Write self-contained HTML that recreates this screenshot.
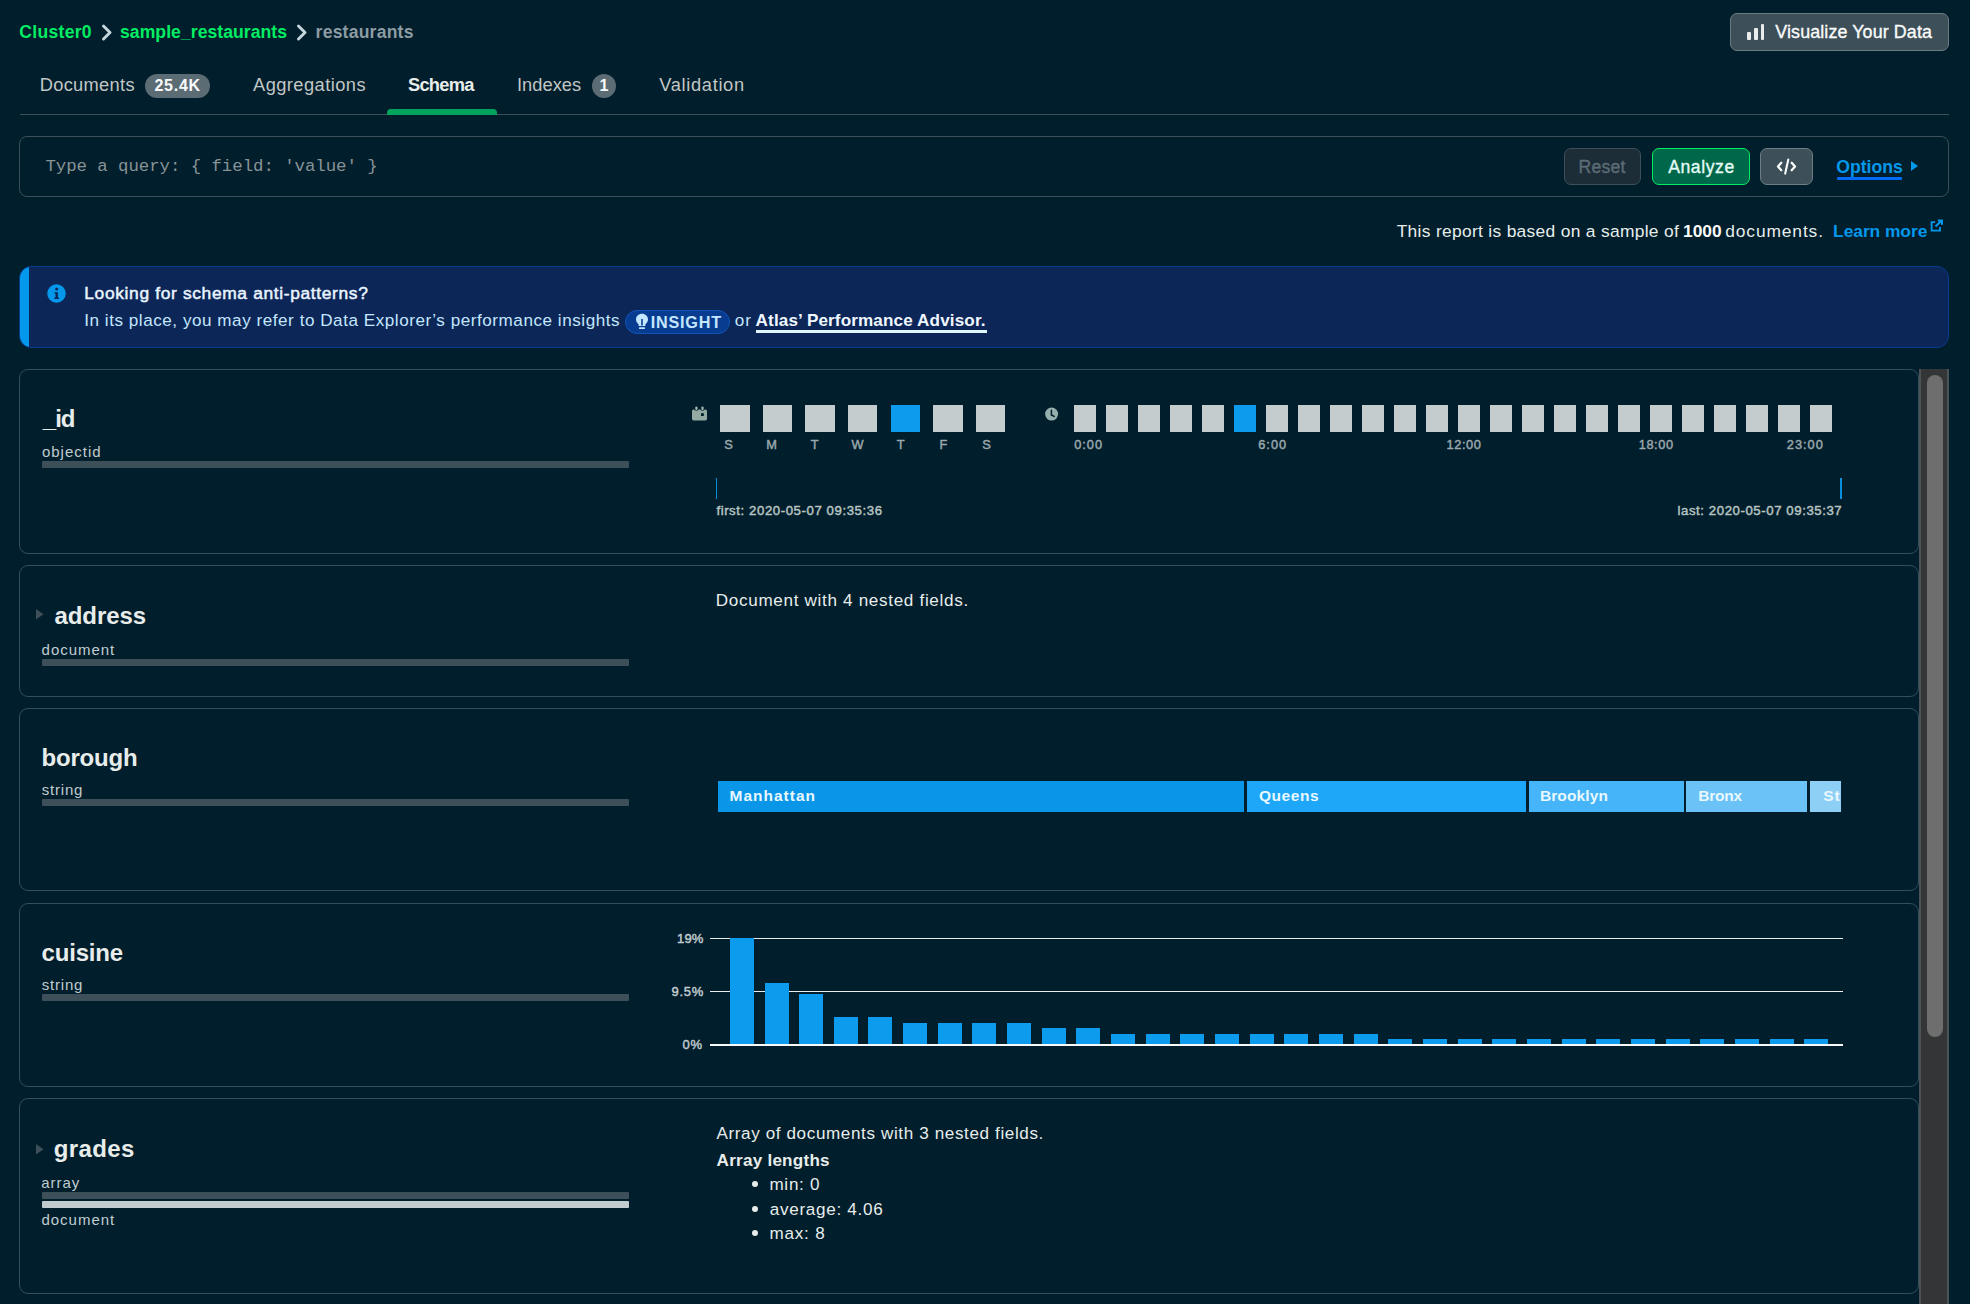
<!DOCTYPE html>
<html><head><meta charset="utf-8">
<style>
*{box-sizing:border-box;margin:0;padding:0}
html,body{width:1970px;height:1304px;overflow:hidden;background:#001E2B;font-family:"Liberation Sans",sans-serif;color:#E8EDEB}
.a{position:absolute;white-space:pre;line-height:1}
.card{position:absolute;left:19px;width:1900px;border:1px solid #30505C;border-radius:9px}
.bar{position:absolute;left:42px;width:587px;height:6px;background:#3D4F58;border-radius:1px}
.sq{position:absolute}
.cb{position:absolute;width:24px;background:#0D9BEE}
</style></head><body>
<svg class="a" style="left:100px;top:23px" width="14" height="19" viewBox="0 0 14 19"><path d="M3.5 3 L10 9.5 L3.5 16" fill="none" stroke="#C5D5DC" stroke-width="3" stroke-linecap="round" stroke-linejoin="round"/></svg>
<svg class="a" style="left:295px;top:23px" width="14" height="19" viewBox="0 0 14 19"><path d="M3.5 3 L10 9.5 L3.5 16" fill="none" stroke="#C5D5DC" stroke-width="3" stroke-linecap="round" stroke-linejoin="round"/></svg>
<div class="a" style="left:1730px;top:13px;width:219px;height:38px;background:#3D4F58;border:1px solid #6A7B84;border-radius:7px"></div>
<div class="a" style="left:1747px;top:32px;width:3.5px;height:7.5px;background:#E8EDEB;border-radius:1px"></div>
<div class="a" style="left:1754px;top:28px;width:3.8px;height:11.5px;background:#E8EDEB;border-radius:1px"></div>
<div class="a" style="left:1761px;top:24px;width:3.3px;height:15.5px;background:#E8EDEB;border-radius:1px"></div>
<div class="a" style="left:145px;top:74px;width:65px;height:24px;background:#5C6C75;border-radius:12px"></div>
<div class="a" style="left:592px;top:74px;width:24px;height:24px;background:#5C6C75;border-radius:12px"></div>
<div class="a" style="left:20px;top:114px;width:1929px;height:1px;background:#3D4F58"></div>
<div class="a" style="left:387px;top:109px;width:110px;height:6px;background:#00A35C;border-radius:4px 4px 0 0"></div>
<div class="a" style="left:19px;top:136px;width:1930px;height:61px;border:1px solid #3D4F58;border-radius:8px"></div>
<div class="a" style="left:1564px;top:148px;width:77px;height:37px;background:#1C2D38;border:1px solid #3D4F58;border-radius:7px"></div>
<div class="a" style="left:1652px;top:148px;width:98px;height:37px;background:#00684A;border:1px solid #00ED64;border-radius:7px"></div>
<div class="a" style="left:1760px;top:148px;width:53px;height:37px;background:#3D4F58;border:1px solid #6D7E86;border-radius:7px"></div>
<svg class="a" style="left:1776px;top:158px" width="21" height="17" viewBox="0 0 21 17"><path d="M5.3 4.8 L2 8.5 L5.3 12.2 M15.7 4.8 L19 8.5 L15.7 12.2" fill="none" stroke="#F9FBFA" stroke-width="2.3" stroke-linecap="round" stroke-linejoin="round"/><path d="M12.3 1.6 L9.2 15.6" fill="none" stroke="#F9FBFA" stroke-width="2.1" stroke-linecap="round"/></svg>
<div class="a" style="left:1837px;top:177px;width:65px;height:3px;background:#016BF8;border-radius:1px"></div>
<svg class="a" style="left:1910px;top:160px" width="9" height="12" viewBox="0 0 9 12"><path d="M1 1 L8 6 L1 11 Z" fill="#0498EC"/></svg>
<svg class="a" style="left:1929px;top:219px" width="15" height="14" viewBox="0 0 15 14"><path d="M6 3.2 H2.6 V11.6 H11 V8" fill="none" stroke="#0498EC" stroke-width="1.8"/><path d="M6.5 7.5 L12.5 1.8 M8.8 1.5 H13 V5.7" fill="none" stroke="#0498EC" stroke-width="2"/></svg>
<div class="a" style="left:19px;top:266px;width:1930px;height:82px;background:#0C2657;border:1px solid #083C90;border-radius:12px;overflow:hidden"><div style="position:absolute;left:-1px;top:-1px;width:10px;height:82px;background:#0498EC"></div></div>
<svg class="a" style="left:47px;top:284px" width="19" height="19" viewBox="0 0 19 19"><circle cx="9.5" cy="9.5" r="9.3" fill="#0498EC"/><circle cx="9.7" cy="5" r="1.6" fill="#0C2657"/><path d="M7.3 8.2 H10.9 V13.6 H12 V15 H7.3 V13.6 H8.5 V9.6 H7.3 Z" fill="#0C2657"/></svg>
<div class="a" style="left:625px;top:310px;width:105px;height:24px;background:#083C90;border:1px solid #1254B7;border-radius:12px"></div>
<svg class="a" style="left:635px;top:313px" width="14" height="17" viewBox="0 0 14 17"><path d="M7 0.8 C3.5 0.8 1 3.3 1 6.5 C1 8.7 2.3 10.1 3.6 11.3 V13 H10.4 V11.3 C11.7 10.1 13 8.7 13 6.5 C13 3.3 10.5 0.8 7 0.8 Z" fill="#C3E7FE"/><rect x="6.2" y="6" width="1.6" height="6.5" fill="#083C90"/><rect x="4" y="14.2" width="6" height="1.8" rx="0.6" fill="#C3E7FE"/></svg>
<div class="a" style="left:756px;top:330px;width:231px;height:2.5px;background:#E1F7FF"></div>
<div class="a" style="left:1919px;top:369px;width:30px;height:935px;background:#333536;border-left:2px solid #4B5356;border-right:2px solid #4B5356"></div>
<div class="a" style="left:1927px;top:375px;width:16px;height:662px;background:#6E6E6E;border-radius:8px"></div>
<div class="card" style="top:369px;height:185px"></div>
<div class="card" style="top:565px;height:132px"></div>
<div class="card" style="top:708px;height:183px"></div>
<div class="card" style="top:903px;height:184px"></div>
<div class="card" style="top:1098px;height:196px"></div>
<div class="bar" style="top:461px;height:7px"></div>
<div class="bar" style="top:659px;height:7px"></div>
<div class="bar" style="top:799px;height:7px"></div>
<div class="bar" style="top:994px;height:7px"></div>
<div class="bar" style="top:1192px;height:7px"></div>
<div class="bar" style="top:1201px;height:7px;background:#C1CCD0"></div>
<svg class="a" style="left:35.5px;top:609px" width="8" height="11" viewBox="0 0 8 11"><path d="M0 0 L7.5 5.2 L0 10.4 Z" fill="#3D4F58"/></svg>
<svg class="a" style="left:35.5px;top:1144px" width="8" height="11" viewBox="0 0 8 11"><path d="M0 0 L7.5 5.2 L0 10.4 Z" fill="#3D4F58"/></svg>
<div class="a" style="left:752px;top:1180.8px;width:6px;height:6px;border-radius:50%;background:#E8EDEB"></div>
<div class="a" style="left:752px;top:1205.9px;width:6px;height:6px;border-radius:50%;background:#E8EDEB"></div>
<div class="a" style="left:752px;top:1230.0px;width:6px;height:6px;border-radius:50%;background:#E8EDEB"></div>
<div class="sq" style="left:720.00px;top:405px;width:29.5px;height:27px;background:#C5CCCE"></div>
<div class="sq" style="left:762.63px;top:405px;width:29.5px;height:27px;background:#C5CCCE"></div>
<div class="sq" style="left:805.26px;top:405px;width:29.5px;height:27px;background:#C5CCCE"></div>
<div class="sq" style="left:847.89px;top:405px;width:29.5px;height:27px;background:#C5CCCE"></div>
<div class="sq" style="left:890.52px;top:405px;width:29.5px;height:27px;background:#0D9BEE"></div>
<div class="sq" style="left:933.15px;top:405px;width:29.5px;height:27px;background:#C5CCCE"></div>
<div class="sq" style="left:975.78px;top:405px;width:29.5px;height:27px;background:#C5CCCE"></div>
<div class="sq" style="left:1074px;top:405px;width:22px;height:27px;background:#C5CCCE"></div>
<div class="sq" style="left:1106px;top:405px;width:22px;height:27px;background:#C5CCCE"></div>
<div class="sq" style="left:1138px;top:405px;width:22px;height:27px;background:#C5CCCE"></div>
<div class="sq" style="left:1170px;top:405px;width:22px;height:27px;background:#C5CCCE"></div>
<div class="sq" style="left:1202px;top:405px;width:22px;height:27px;background:#C5CCCE"></div>
<div class="sq" style="left:1234px;top:405px;width:22px;height:27px;background:#0D9BEE"></div>
<div class="sq" style="left:1266px;top:405px;width:22px;height:27px;background:#C5CCCE"></div>
<div class="sq" style="left:1298px;top:405px;width:22px;height:27px;background:#C5CCCE"></div>
<div class="sq" style="left:1330px;top:405px;width:22px;height:27px;background:#C5CCCE"></div>
<div class="sq" style="left:1362px;top:405px;width:22px;height:27px;background:#C5CCCE"></div>
<div class="sq" style="left:1394px;top:405px;width:22px;height:27px;background:#C5CCCE"></div>
<div class="sq" style="left:1426px;top:405px;width:22px;height:27px;background:#C5CCCE"></div>
<div class="sq" style="left:1458px;top:405px;width:22px;height:27px;background:#C5CCCE"></div>
<div class="sq" style="left:1490px;top:405px;width:22px;height:27px;background:#C5CCCE"></div>
<div class="sq" style="left:1522px;top:405px;width:22px;height:27px;background:#C5CCCE"></div>
<div class="sq" style="left:1554px;top:405px;width:22px;height:27px;background:#C5CCCE"></div>
<div class="sq" style="left:1586px;top:405px;width:22px;height:27px;background:#C5CCCE"></div>
<div class="sq" style="left:1618px;top:405px;width:22px;height:27px;background:#C5CCCE"></div>
<div class="sq" style="left:1650px;top:405px;width:22px;height:27px;background:#C5CCCE"></div>
<div class="sq" style="left:1682px;top:405px;width:22px;height:27px;background:#C5CCCE"></div>
<div class="sq" style="left:1714px;top:405px;width:22px;height:27px;background:#C5CCCE"></div>
<div class="sq" style="left:1746px;top:405px;width:22px;height:27px;background:#C5CCCE"></div>
<div class="sq" style="left:1778px;top:405px;width:22px;height:27px;background:#C5CCCE"></div>
<div class="sq" style="left:1810px;top:405px;width:22px;height:27px;background:#C5CCCE"></div>
<svg class="a" style="left:691px;top:405px" width="17" height="17" viewBox="0 0 17 17"><rect x="1" y="4.4" width="15" height="11" rx="1.6" fill="#92AAA2"/><circle cx="5.4" cy="3.6" r="2.2" fill="#001E2B"/><circle cx="11.5" cy="3.6" r="2.2" fill="#001E2B"/><rect x="4.3" y="1.4" width="2.2" height="3.6" rx="1.1" fill="#A6BCB8"/><rect x="10.4" y="1.4" width="2.2" height="3.6" rx="1.1" fill="#A6BCB8"/><rect x="10" y="8.2" width="2.8" height="2.8" fill="#001E2B"/></svg>
<svg class="a" style="left:1044px;top:407px" width="15" height="15" viewBox="0 0 15 15"><circle cx="7.6" cy="7.1" r="6.5" fill="#96B0AE"/><path d="M7.4 3.2 V8 L10.2 9.4" fill="none" stroke="#001E2B" stroke-width="1.5" stroke-linecap="round" stroke-linejoin="round"/></svg>
<div class="a" style="left:715.5px;top:478px;width:1.6px;height:21px;background:#0A8FDC"></div>
<div class="a" style="left:1840px;top:478px;width:1.6px;height:21px;background:#0A8FDC"></div>
<div class="a" style="left:718px;top:781px;width:526px;height:31px;background:#0A96E8"></div>
<div class="a" style="left:1247px;top:781px;width:279px;height:31px;background:#1EA7F8"></div>
<div class="a" style="left:1529px;top:781px;width:155px;height:31px;background:#45B4F8"></div>
<div class="a" style="left:1686px;top:781px;width:121px;height:31px;background:#6AC2F7"></div>
<div class="a" style="left:1810px;top:781px;width:31px;height:31px;background:#8ECFF5"></div>
<div class="a" style="left:710px;top:937.5px;width:1133px;height:1.5px;background:#E8EDEB"></div>
<div class="a" style="left:710px;top:990.5px;width:1133px;height:1.5px;background:#E8EDEB"></div>
<div class="a" style="left:710px;top:1043.6px;width:1133px;height:2.5px;background:#F9FBFA"></div>
<div class="cb" style="left:729.8px;top:938.0px;height:106.0px"></div>
<div class="cb" style="left:764.5px;top:982.8px;height:61.2px"></div>
<div class="cb" style="left:799.1px;top:993.8px;height:50.2px"></div>
<div class="cb" style="left:833.8px;top:1016.6px;height:27.4px"></div>
<div class="cb" style="left:868.4px;top:1016.6px;height:27.4px"></div>
<div class="cb" style="left:903.1px;top:1022.7px;height:21.3px"></div>
<div class="cb" style="left:937.8px;top:1022.7px;height:21.3px"></div>
<div class="cb" style="left:972.4px;top:1022.7px;height:21.3px"></div>
<div class="cb" style="left:1007.1px;top:1022.7px;height:21.3px"></div>
<div class="cb" style="left:1041.7px;top:1027.6px;height:16.4px"></div>
<div class="cb" style="left:1076.4px;top:1027.6px;height:16.4px"></div>
<div class="cb" style="left:1111.1px;top:1034.0px;height:10.0px"></div>
<div class="cb" style="left:1145.7px;top:1034.0px;height:10.0px"></div>
<div class="cb" style="left:1180.4px;top:1034.0px;height:10.0px"></div>
<div class="cb" style="left:1215.0px;top:1034.0px;height:10.0px"></div>
<div class="cb" style="left:1249.7px;top:1034.0px;height:10.0px"></div>
<div class="cb" style="left:1284.4px;top:1034.0px;height:10.0px"></div>
<div class="cb" style="left:1319.0px;top:1034.0px;height:10.0px"></div>
<div class="cb" style="left:1353.7px;top:1034.0px;height:10.0px"></div>
<div class="cb" style="left:1388.3px;top:1039.0px;height:5.0px"></div>
<div class="cb" style="left:1423.0px;top:1039.0px;height:5.0px"></div>
<div class="cb" style="left:1457.7px;top:1039.0px;height:5.0px"></div>
<div class="cb" style="left:1492.3px;top:1039.0px;height:5.0px"></div>
<div class="cb" style="left:1527.0px;top:1039.0px;height:5.0px"></div>
<div class="cb" style="left:1561.6px;top:1039.0px;height:5.0px"></div>
<div class="cb" style="left:1596.3px;top:1039.0px;height:5.0px"></div>
<div class="cb" style="left:1631.0px;top:1039.0px;height:5.0px"></div>
<div class="cb" style="left:1665.6px;top:1039.0px;height:5.0px"></div>
<div class="cb" style="left:1700.3px;top:1039.0px;height:5.0px"></div>
<div class="cb" style="left:1734.9px;top:1039.0px;height:5.0px"></div>
<div class="cb" style="left:1769.6px;top:1039.0px;height:5.0px"></div>
<div class="cb" style="left:1804.3px;top:1039.0px;height:5.0px"></div>
<div class="a" style="left:19.30px;top:24.10px;font-size:17.6px;font-weight:700;color:#00ED64;letter-spacing:0.280px">Cluster0</div>
<div class="a" style="left:120.00px;top:24.10px;font-size:17.6px;font-weight:700;color:#00ED64;letter-spacing:0.046px">sample_restaurants</div>
<div class="a" style="left:315.60px;top:24.10px;font-size:17.6px;font-weight:700;color:#8D9CA3;letter-spacing:0.203px">restaurants</div>
<div class="a" style="left:39.70px;top:76.31px;font-size:18.3px;font-weight:400;color:#C1C7C6;letter-spacing:0.299px">Documents</div>
<div class="a" style="left:154.50px;top:78.26px;font-size:16px;font-weight:700;color:#F9FBFA;letter-spacing:0.715px">25.4K</div>
<div class="a" style="left:253.00px;top:76.31px;font-size:18.3px;font-weight:400;color:#C1C7C6;letter-spacing:0.437px">Aggregations</div>
<div class="a" style="left:408.00px;top:76.31px;font-size:18.3px;font-weight:700;color:#E8EDEB;letter-spacing:-0.762px">Schema</div>
<div class="a" style="left:516.90px;top:76.31px;font-size:18.3px;font-weight:400;color:#C1C7C6;letter-spacing:0.043px">Indexes</div>
<div class="a" style="left:599.50px;top:78.26px;font-size:16px;font-weight:700;color:#F9FBFA;letter-spacing:0.000px">1</div>
<div class="a" style="left:659.30px;top:76.31px;font-size:18.3px;font-weight:400;color:#C1C7C6;letter-spacing:0.651px">Validation</div>
<div class="a" style="left:1775.30px;top:24.45px;font-size:17.9px;font-weight:400;color:#F9FBFA;letter-spacing:0.101px;-webkit-text-stroke:0.35px #F9FBFA">Visualize Your Data</div>
<div class="a" style="left:45.40px;top:158.26px;font-size:17.4px;font-weight:400;color:#889397;letter-spacing:-0.055px;font-family:'Liberation Mono',monospace">Type a query: { field: 'value' }</div>
<div class="a" style="left:1578.60px;top:158.70px;font-size:17.6px;font-weight:400;color:#5C6C75;letter-spacing:0.203px;-webkit-text-stroke:0.35px #5C6C75">Reset</div>
<div class="a" style="left:1668.20px;top:158.70px;font-size:17.6px;font-weight:400;color:#E3FCF7;letter-spacing:0.579px;-webkit-text-stroke:0.35px #E3FCF7">Analyze</div>
<div class="a" style="left:1836.30px;top:158.70px;font-size:17.6px;font-weight:700;color:#0498EC;letter-spacing:-0.015px">Options</div>
<div class="a" style="left:1396.70px;top:222.77px;font-size:17.4px;font-weight:400;color:#E8EDEB;letter-spacing:0.308px">This report is based on a sample of</div>
<div class="a" style="left:1683.00px;top:222.77px;font-size:17.4px;font-weight:700;color:#F9FBFA;letter-spacing:-0.010px">1000</div>
<div class="a" style="left:1725.30px;top:222.77px;font-size:17.4px;font-weight:400;color:#E8EDEB;letter-spacing:0.865px">documents.</div>
<div class="a" style="left:1833.10px;top:222.77px;font-size:17.4px;font-weight:700;color:#0498EC;letter-spacing:-0.054px">Learn more</div>
<div class="a" style="left:84.30px;top:285.07px;font-size:17.4px;font-weight:400;color:#E8F4FF;letter-spacing:0.644px;-webkit-text-stroke:0.5px #E8F4FF">Looking for schema anti-patterns?</div>
<div class="a" style="left:84.20px;top:312.12px;font-size:17.1px;font-weight:400;color:#C3E7FE;letter-spacing:0.535px">In its place, you may refer to Data Explorer’s performance insights</div>
<div class="a" style="left:650.80px;top:313.69px;font-size:16.2px;font-weight:700;color:#C3E7FE;letter-spacing:0.766px">INSIGHT</div>
<div class="a" style="left:734.64px;top:312.12px;font-size:17.1px;font-weight:400;color:#C3E7FE;letter-spacing:1.000px">or</div>
<div class="a" style="left:755.60px;top:312.12px;font-size:17.1px;font-weight:700;color:#F0F8FF;letter-spacing:0.133px">Atlas’ Performance Advisor.</div>
<div class="a" style="left:42.79px;top:407.28px;font-size:24px;font-weight:700;color:#E8EDEB;letter-spacing:-1.000px">_id</div>
<div class="a" style="left:41.92px;top:444.00px;font-size:15px;font-weight:400;color:#C1CCD0;letter-spacing:1.000px">objectid</div>
<div class="a" style="left:54.40px;top:604.28px;font-size:24px;font-weight:700;color:#E8EDEB;letter-spacing:-0.051px">address</div>
<div class="a" style="left:41.60px;top:641.60px;font-size:15px;font-weight:400;color:#C1CCD0;letter-spacing:0.970px">document</div>
<div class="a" style="left:41.40px;top:746.18px;font-size:24px;font-weight:700;color:#E8EDEB;letter-spacing:-0.157px">borough</div>
<div class="a" style="left:41.80px;top:781.60px;font-size:15px;font-weight:400;color:#C1CCD0;letter-spacing:0.793px">string</div>
<div class="a" style="left:41.60px;top:941.28px;font-size:24px;font-weight:700;color:#E8EDEB;letter-spacing:-0.192px">cuisine</div>
<div class="a" style="left:41.80px;top:976.60px;font-size:15px;font-weight:400;color:#C1CCD0;letter-spacing:0.793px">string</div>
<div class="a" style="left:53.70px;top:1137.28px;font-size:24px;font-weight:700;color:#E8EDEB;letter-spacing:0.369px">grades</div>
<div class="a" style="left:41.20px;top:1174.90px;font-size:15px;font-weight:400;color:#C1CCD0;letter-spacing:0.956px">array</div>
<div class="a" style="left:41.40px;top:1211.80px;font-size:15px;font-weight:400;color:#C1CCD0;letter-spacing:1.000px">document</div>
<div class="a" style="left:715.80px;top:592.12px;font-size:17.1px;font-weight:400;color:#E8EDEB;letter-spacing:0.675px">Document with 4 nested fields.</div>
<div class="a" style="left:716.40px;top:1125.12px;font-size:17.1px;font-weight:400;color:#E8EDEB;letter-spacing:0.612px">Array of documents with 3 nested fields.</div>
<div class="a" style="left:716.60px;top:1151.62px;font-size:17.1px;font-weight:700;color:#E8EDEB;letter-spacing:0.232px">Array lengths</div>
<div class="a" style="left:769.40px;top:1176.12px;font-size:17.1px;font-weight:400;color:#E8EDEB;letter-spacing:0.729px">min: 0</div>
<div class="a" style="left:769.80px;top:1200.62px;font-size:17.1px;font-weight:400;color:#E8EDEB;letter-spacing:0.694px">average: 4.06</div>
<div class="a" style="left:769.40px;top:1225.12px;font-size:17.1px;font-weight:400;color:#E8EDEB;letter-spacing:0.799px">max: 8</div>
<div class="a" style="left:724.35px;top:438.56px;font-size:12.8px;font-weight:400;color:#9BA8AD;letter-spacing:0.000px;-webkit-text-stroke:0.45px #9BA8AD">S</div>
<div class="a" style="left:766.25px;top:438.56px;font-size:12.8px;font-weight:400;color:#9BA8AD;letter-spacing:0.000px;-webkit-text-stroke:0.45px #9BA8AD">M</div>
<div class="a" style="left:810.70px;top:438.56px;font-size:12.8px;font-weight:400;color:#9BA8AD;letter-spacing:0.000px;-webkit-text-stroke:0.45px #9BA8AD">T</div>
<div class="a" style="left:851.55px;top:438.56px;font-size:12.8px;font-weight:400;color:#9BA8AD;letter-spacing:0.000px;-webkit-text-stroke:0.45px #9BA8AD">W</div>
<div class="a" style="left:896.70px;top:438.56px;font-size:12.8px;font-weight:400;color:#9BA8AD;letter-spacing:0.000px;-webkit-text-stroke:0.45px #9BA8AD">T</div>
<div class="a" style="left:939.40px;top:438.56px;font-size:12.8px;font-weight:400;color:#9BA8AD;letter-spacing:0.000px;-webkit-text-stroke:0.45px #9BA8AD">F</div>
<div class="a" style="left:982.35px;top:438.56px;font-size:12.8px;font-weight:400;color:#9BA8AD;letter-spacing:0.000px;-webkit-text-stroke:0.45px #9BA8AD">S</div>
<div class="a" style="left:1074.20px;top:438.56px;font-size:12.8px;font-weight:400;color:#9BA8AD;letter-spacing:1.000px;-webkit-text-stroke:0.45px #9BA8AD">0:00</div>
<div class="a" style="left:1258.25px;top:438.56px;font-size:12.8px;font-weight:400;color:#9BA8AD;letter-spacing:1.000px;-webkit-text-stroke:0.45px #9BA8AD">6:00</div>
<div class="a" style="left:1446.60px;top:438.56px;font-size:12.8px;font-weight:400;color:#9BA8AD;letter-spacing:0.572px;-webkit-text-stroke:0.45px #9BA8AD">12:00</div>
<div class="a" style="left:1638.70px;top:438.56px;font-size:12.8px;font-weight:400;color:#9BA8AD;letter-spacing:0.597px;-webkit-text-stroke:0.45px #9BA8AD">18:00</div>
<div class="a" style="left:1786.79px;top:438.56px;font-size:12.8px;font-weight:400;color:#9BA8AD;letter-spacing:1.000px;-webkit-text-stroke:0.45px #9BA8AD">23:00</div>
<div class="a" style="left:716.40px;top:504.43px;font-size:13.2px;font-weight:400;color:#B8C4C2;letter-spacing:0.583px;-webkit-text-stroke:0.45px #B8C4C2">first: 2020-05-07 09:35:36</div>
<div class="a" style="left:1677.50px;top:504.43px;font-size:13.2px;font-weight:400;color:#B8C4C2;letter-spacing:0.579px;-webkit-text-stroke:0.45px #B8C4C2">last: 2020-05-07 09:35:37</div>
<div class="a" style="left:677.00px;top:931.60px;font-size:13px;font-weight:400;color:#C1CCD0;letter-spacing:0.170px;-webkit-text-stroke:0.45px #C1CCD0">19%</div>
<div class="a" style="left:671.60px;top:985.40px;font-size:13px;font-weight:400;color:#C1CCD0;letter-spacing:0.709px;-webkit-text-stroke:0.45px #C1CCD0">9.5%</div>
<div class="a" style="left:682.39px;top:1038.20px;font-size:13px;font-weight:400;color:#C1CCD0;letter-spacing:1.000px;-webkit-text-stroke:0.45px #C1CCD0">0%</div>
<div class="a" style="left:729.53px;top:788.18px;font-size:15.5px;font-weight:700;color:#E8F8FF;letter-spacing:1.000px">Manhattan</div>
<div class="a" style="left:1259.00px;top:788.18px;font-size:15.5px;font-weight:700;color:#E8F8FF;letter-spacing:0.533px">Queens</div>
<div class="a" style="left:1539.90px;top:788.18px;font-size:15.5px;font-weight:700;color:#E8F8FF;letter-spacing:0.127px">Brooklyn</div>
<div class="a" style="left:1698.20px;top:788.18px;font-size:15.5px;font-weight:700;color:#E8F8FF;letter-spacing:-0.240px">Bronx</div>
<div class="a" style="left:1810px;top:781px;width:31px;height:31px;overflow:hidden"><div class="a" style="left:13.20px;top:7.18px;font-size:15.5px;font-weight:700;color:#E8F8FF;letter-spacing:1.000px">Staten Island</div></div>
</body></html>
